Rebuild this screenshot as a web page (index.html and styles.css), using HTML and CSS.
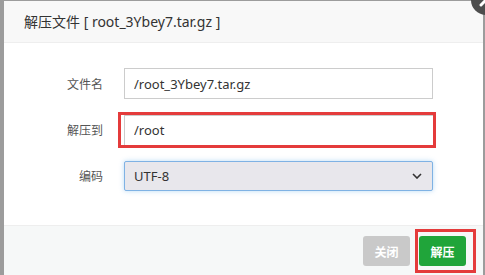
FILE: index.html
```html
<!DOCTYPE html>
<html lang="zh-CN">
<head>
    <meta charset="UTF-8">
    <title>解压文件</title>
    <link rel="stylesheet" href="styles.css">
</head>
<body>
    <div id="layer">
        <div class="layer-title">解压文件 [ root_3Ybey7.tar.gz ]</div>
        <span class="layer-close">
            <svg width="32" height="32" viewBox="0 0 32 32">
                <circle cx="16" cy="16" r="15" fill="#4d4d4d"/>
                <path d="M11 11 L21 21 M21 11 L11 21" stroke="#fff" stroke-width="3" stroke-linecap="round"/>
            </svg>
        </span>
        <div class="layer-body">
            <div class="line">
                <span class="tname">文件名</span>
                <input class="bt-input" type="text" value="/root_3Ybey7.tar.gz">
            </div>
            <div class="line">
                <span class="tname">解压到</span>
                <div class="mark">
                    <input class="bt-input" type="text" value="/root">
                </div>
            </div>
            <div class="line">
                <span class="tname">编码</span>
                <div class="bt-select">
                    <span>UTF-8</span>
                    <svg width="10" height="6" viewBox="0 0 10 6"><path d="M1 1 L5 5 L9 1" fill="none" stroke="#333" stroke-width="1.6"/></svg>
                </div>
            </div>
        </div>
        <div class="layer-btn">
            <button class="btn btn-close">关闭</button>
            <span class="mark-btn"><button class="btn btn-ok">解压</button></span>
        </div>
    </div>
</body>
</html>
```

FILE: styles.css
```css
*{
    box-sizing: border-box;
    margin: 0px;
    padding: 0px;
}
body{
    background-color: #9c9c9c;
    width: 485px;
    height: 275px;
    overflow: hidden;
    padding: 1px 2px 0px 4px;
    font-family: "Noto Sans CJK SC", "Noto Sans", sans-serif;
}
#layer{
    position: relative;
    background-color: #fff;
    width: 479px;
    height: 274px;
}
.layer-title{
    height: 42px;
    line-height: 41px;
    padding-left: 20px;
    font-size: 14px;
    color: #333;
    font-family: "Noto Sans", "Noto Sans CJK SC", sans-serif;
    background-color: #f8f8f8;
    border-bottom: 1px solid #eee;
}
.layer-close{
    position: absolute;
    left: 466px;
    top: -17px;
}
.layer-body{
    padding: 25px 0px 0px 0px;
    height: 182px;
}
.line{
    display: flex;
    align-items: center;
    height: 31px;
    margin-bottom: 15px;
}
.line:nth-child(3){
    margin-top: 3px;
}
.tname{
    width: 99px;
    text-align: right;
    font-size: 12px;
    color: #555;
    margin-right: 21px;
}
.bt-input{
    width: 309px;
    height: 31px;
    border: 1px solid #ccc;
    padding-left: 9px;
    font-size: 13px;
    color: #333;
    font-family: "Noto Sans", sans-serif;
    background: #fff;
}
.mark{
    border: 3px solid #e43b3b;
    padding-left: 3px;
    margin: -3px 0px -3px -6px;
}
.mark .bt-input{
    height: 30px;
    width: 309px;
    border-right: none;
    border-bottom: none;
}
.bt-select{
    width: 309px;
    height: 30px;
    display: flex;
    align-items: center;
    justify-content: space-between;
    padding: 0px 10px 0px 9px;
    background-color: #e8e7ec;
    border: 1px solid #7fb2e4;
    box-shadow: 0px 0px 5px rgba(102,175,233,0.45);
    border-radius: 2px;
    font-size: 13px;
    color: #333;
    font-family: "Noto Sans", sans-serif;
}
.layer-btn{
    height: 50px;
    background-color: #f6f8f8;
    border-top: 1px solid #eee;
    display: flex;
    justify-content: flex-end;
    align-items: flex-start;
    padding: 10px 17px 0px 0px;
    gap: 9px;
}
.btn{
    width: 47px;
    height: 30px;
    border: none;
    border-radius: 3px;
    color: #fff;
    font-size: 12px;
    font-family: "Noto Sans CJK SC", sans-serif;
    font-weight: bold;
}
.btn-close{
    background-color: #c9c9c9;
}
.btn-ok{
    background-color: #20a53a;
    display: block;
}
.mark-btn{
    border: 3px solid #e43b3b;
    padding: 4px 7px 4px 1px;
    margin: -7px -10px 0px -4px;
}
```
